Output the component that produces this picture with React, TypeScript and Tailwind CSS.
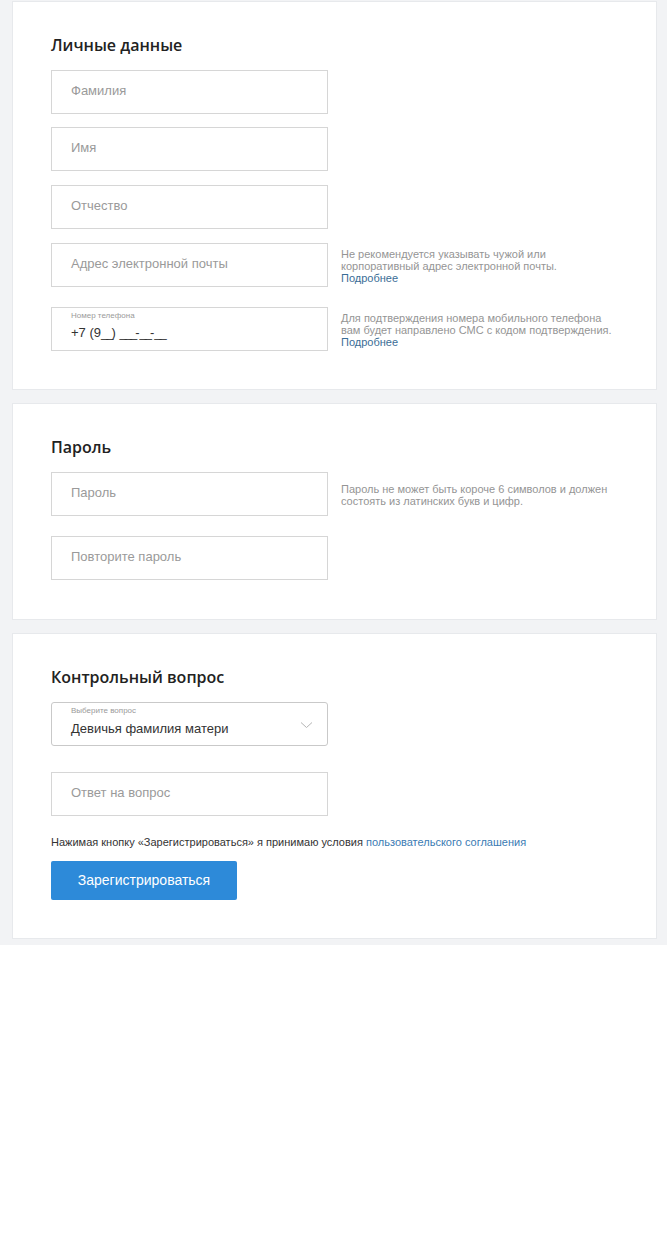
import type { ReactNode } from "react";

const font = { fontFamily: '"Liberation Sans", Arial, sans-serif' };

function Card({
  title,
  className,
  children,
}: {
  title: string;
  className?: string;
  children: ReactNode;
}) {
  return (
    <section
      className={
        "bg-white pt-[31px] pr-[39px] pl-[38px] shadow-[0_0_0_1px_#e7e9ec] " +
        (className ?? "pb-[38px]")
      }
    >
      <h2 className="mb-[13px] font-['Open_Sans',sans-serif] text-[16px] font-semibold leading-[24px] text-[#222]">
        {title}
      </h2>
      {children}
    </section>
  );
}

function Field({ placeholder }: { placeholder: string }) {
  return (
    <div className="flex h-[44px] w-[277px] shrink-0 items-center border border-[#d6d6d6] bg-white px-[19px] pb-[2px] text-[13px] text-[#9a9a9a]">
      {placeholder}
    </div>
  );
}

function Hint({ children }: { children: ReactNode }) {
  return (
    <div className="ml-[13px] pt-[5px] text-[11px] leading-[12px] text-[#959595]">
      {children}
    </div>
  );
}

function More() {
  return <div className="text-[#3a6d96]">Подробнее</div>;
}

function Row({ className, children }: { className?: string; children: ReactNode }) {
  return <div className={"flex items-start " + (className ?? "")}>{children}</div>;
}

export default function App() {
  return (
    <div style={font} className="min-h-[1238px] bg-white">
      <div className="flex flex-col gap-[15px] bg-[#f2f3f5] pt-[2px] pr-[11px] pb-[7px] pl-[13px]">
        <Card title="Личные данные">
          <Field placeholder="Фамилия" />
          <div className="mt-[13px]">
            <Field placeholder="Имя" />
          </div>
          <div className="mt-[14px]">
            <Field placeholder="Отчество" />
          </div>
          <Row className="mt-[14px]">
            <Field placeholder="Адрес электронной почты" />
            <Hint>
              Не рекомендуется указывать чужой или
              <br />
              корпоративный адрес электронной почты.
              <More />
            </Hint>
          </Row>
          <Row className="mt-[20px]">
            <div className="flex h-[44px] w-[277px] shrink-0 flex-col border border-[#d6d6d6] bg-white px-[19px] pt-[3px]">
              <span className="text-[8px] leading-[10px] text-[#9a9a9a]">Номер телефона</span>
              <span className="mt-[4px] text-[13px] leading-[16px] text-[#333]">
                +7 (9<span className="tracking-[-2px]">__</span>) <span className="tracking-[-2px]">___</span>-<span className="tracking-[-2px]">__</span>-<span className="tracking-[-2px]">__</span>
              </span>
            </div>
            <Hint>
              Для подтверждения номера мобильного телефона
              <br />
              вам будет направлено СМС с кодом подтверждения.
              <More />
            </Hint>
          </Row>
        </Card>

        <Card title="Пароль" className="pb-[39px]">
          <Row>
            <Field placeholder="Пароль" />
            <Hint>
              <span className="block pt-[6px]">
                Пароль не может быть короче 6 символов и должен
                <br />
                состоять из латинских букв и цифр.
              </span>
            </Hint>
          </Row>
          <div className="mt-[20px]">
            <Field placeholder="Повторите пароль" />
          </div>
        </Card>

        <Card title="Контрольный вопрос">
          <div className="relative flex h-[44px] w-[277px] flex-col rounded-[3px] border border-[#c9c9c9] bg-white px-[19px] pt-[3px]">
            <span className="text-[8px] leading-[10px] text-[#9a9a9a]">Выберите вопрос</span>
            <span className="mt-[5px] text-[13px] leading-[16px] text-[#333]">
              Девичья фамилия матери
            </span>
            <svg
              className="absolute top-[18px] right-[14px]"
              width="13"
              height="8"
              viewBox="0 0 13 8"
              fill="none"
            >
              <path d="M1 1.5l5.5 5 5.5-5" stroke="#b5b5b5" strokeWidth="1" />
            </svg>
          </div>
          <div className="mt-[26px]">
            <Field placeholder="Ответ на вопрос" />
          </div>
          <p className="mt-[19px] text-[11px] leading-[14px] text-[#333]">
            Нажимая кнопку «Зарегистрироваться» я принимаю условия{" "}
            <span className="text-[#3a7bb3]">пользовательского соглашения</span>
          </p>
          <button
            type="button"
            className="mt-[12px] h-[39px] w-[186px] rounded-[2px] bg-[#2d8ad9] text-[14px] text-white"
          >
            Зарегистрироваться
          </button>
        </Card>
      </div>
    </div>
  );
}
